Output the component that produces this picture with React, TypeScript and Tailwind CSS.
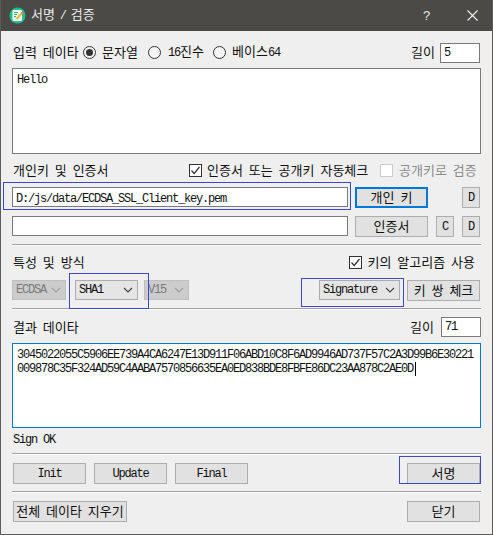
import type { ReactNode } from "react";

const hex1 = "3045022055C5906EE739A4CA6247E13D911F06ABD10C8F6AD9946AD737F57C2A3D99B6E30221";
const hex2 = "009878C35F324AD59C4AABA7570856635EA0ED838BDE8FBFE86DC23AA878C2AE0D";

function Latin({ children }: { children: ReactNode }) {
  return (
    <span className="[font-family:'Liberation_Mono',monospace] text-[12px] font-normal tracking-[-1.2px] [word-spacing:0px]">
      {children}
    </span>
  );
}

// Hangul sits a pixel low in its line box, this lifts it
function Ko({ children, className }: { children: ReactNode; className?: string }) {
  return <span className={`inline-block pb-[2px] ${className ?? ""}`}>{children}</span>;
}

function Radio({ checked, className }: { checked?: boolean; className?: string }) {
  return (
    <span
      className={`flex h-[13px] w-[13px] shrink-0 items-center justify-center rounded-full border border-[#333333] bg-[#f4f4f4] ${className ?? ""}`}
    >
      {checked && <span className="h-[7px] w-[7px] rounded-full bg-[#333333]" />}
    </span>
  );
}

function Check({ checked, disabled, className }: { checked?: boolean; disabled?: boolean; className?: string }) {
  return (
    <span
      className={`flex h-[13px] w-[13px] shrink-0 items-center justify-center border ${
        disabled ? "border-[#cccccc] bg-white" : "border-[#333333] bg-white"
      } ${className ?? ""}`}
    >
      {checked && (
        <svg width="11" height="11" viewBox="0 0 11 11" fill="none" stroke="#333333" strokeWidth="1.2">
          <path d="M1.5 5.5 L4.2 8.5 L9.5 2" />
        </svg>
      )}
    </span>
  );
}

function Btn({ children, className, focus }: { children: ReactNode; className?: string; focus?: boolean }) {
  return (
    <div
      className={`flex h-[21px] shrink-0 items-center justify-center bg-[#e1e1e1] ${
        focus ? "border-2 border-[#0078d7]" : "border border-[#adadad]"
      } ${className ?? ""}`}
    >
      {children}
    </div>
  );
}

function Combo({ label, disabled, className }: { label: string; disabled?: boolean; className?: string }) {
  return (
    <div
      className={`flex h-[20px] shrink-0 items-center justify-between pl-[3px] pr-[4px] border ${
        disabled ? "border-[#bfbfbf] bg-[#cccccc] text-[#7a7a7a]" : "border-[#acacac] bg-[#e5e5e5] text-[#111111]"
      } ${className ?? ""}`}
    >
      <Latin>{label}</Latin>
      <svg width="10" height="6" viewBox="0 0 10 6" fill="none" stroke={disabled ? "#a0a0a0" : "#444444"} strokeWidth="1.2">
        <path d="M1 1 L5 5 L9 1" />
      </svg>
    </div>
  );
}

function Sep({ className }: { className?: string }) {
  return <div className={`h-[2px] shrink-0 border-t border-[#a0a0a0] bg-white ${className ?? ""}`} />;
}

function Mark({ className }: { className: string }) {
  return <div className={`pointer-events-none absolute border border-[#3c46d0] ${className}`} />;
}

function AppIcon() {
  return (
    <svg width="17" height="17" viewBox="0 0 17 17" className="shrink-0">
      <circle cx="8.5" cy="8.5" r="8" fill="#1fc08e" />
      <rect x="3.5" y="3" width="9.5" height="11" rx="1" fill="#f4f7f2" />
      <path d="M5 5.5h4M5 7.5h3M5 9.5h2" stroke="#2fae7c" strokeWidth="1" />
      <path d="M7.5 12 L13 6" stroke="#f0b429" strokeWidth="2" />
      <path d="M12.5 6.5 L14 4.8" stroke="#e8748a" strokeWidth="2" />
    </svg>
  );
}

export default function App() {
  return (
    <div className="flex h-[535px] w-[493px] flex-col overflow-hidden border-x border-b border-[#5c5b59] bg-[#efefef] [font-family:'Noto_Sans_CJK_KR',sans-serif] text-[13px] leading-none text-[#111111] [word-spacing:3px]">
      {/* title bar */}
      <div className="flex h-[31px] shrink-0 items-center bg-[#4c4a47] pl-[8px] text-[#e8e8e8]">
        <AppIcon />
        <Ko className="ml-[5px] w-[60px] whitespace-nowrap [word-spacing:2px]">
          서명 <Latin>/</Latin> 검증
        </Ko>
        <span className="ml-[332px] [font-family:'Liberation_Sans',sans-serif] text-[13px]">?</span>
        <svg width="11" height="11" viewBox="0 0 11 11" stroke="#f0f0f0" strokeWidth="1.1" className="ml-[37px]">
          <path d="M0.5 0.5 L10.5 10.5 M10.5 0.5 L0.5 10.5" />
        </svg>
      </div>

      <div className="flex w-[480px] flex-col pl-[11px] pt-[11px]">
        {/* input row */}
        <div className="flex h-[21px] items-center">
          <Ko className="ml-[1px] w-[70px]">입력 데이타</Ko>
          <Radio checked />
          <Ko className="ml-[6px] w-[46px]">문자열</Ko>
          <Radio />
          <Ko className="ml-[7px] w-[45px]">
            <Latin>16</Latin>진수
          </Ko>
          <Radio />
          <Ko className="ml-[6px] w-[179px]">
            베이스<Latin>64</Latin>
          </Ko>
          <Ko className="w-[29px]">길이</Ko>
          <div className="flex h-[20px] w-[40px] items-center border border-[#7a7a7a] bg-white pl-[3px]">
            <Latin>5</Latin>
          </div>
        </div>

        <div className="mt-[5px] h-[86px] w-[469px] border border-[#7a7a7a] bg-white px-[4px] pt-[2px]">
          <Latin>Hello</Latin>
        </div>

        {/* key and certificate */}
        <div className="mt-[7px] flex h-[18px] items-center">
          <Ko className="ml-[1px] w-[176px]">개인키 및 인증서</Ko>
          <Check checked />
          <Ko className="ml-[5px] w-[173px]">인증서 또는 공개키 자동체크</Ko>
          <Check disabled />
          <Ko className="ml-[6px] text-[#8c8c8c]">공개키로 검증</Ko>
        </div>

        <div className="mt-[8px] flex h-[21px] items-start">
          <div className="relative h-[20px] w-[336px] shrink-0 border border-[#7a7a7a] bg-white pl-[3px] pt-[2px]">
            <Latin>D:/js/data/ECDSA_SSL_Client_key.pem</Latin>
            <Mark className="-left-[10px] -top-[6px] h-[28px] w-[348px]" />
          </div>
          <Btn focus className="ml-[7px] w-[73px]"><Ko>개인 키</Ko></Btn>
          <Btn className="ml-[34px] w-[18px]"><Latin>D</Latin></Btn>
        </div>

        <div className="mt-[8px] flex h-[21px] items-start">
          <div className="h-[20px] w-[336px] shrink-0 border border-[#7a7a7a] bg-white" />
          <Btn className="ml-[7px] w-[73px]"><Ko>인증서</Ko></Btn>
          <Btn className="ml-[8px] w-[18px]"><Latin>C</Latin></Btn>
          <Btn className="ml-[8px] w-[18px]"><Latin>D</Latin></Btn>
        </div>

        <Sep className="mt-[7px] w-[469px]" />

        {/* properties */}
        <div className="mt-[7px] flex h-[18px] w-[469px] items-center justify-between pl-[1px] pr-[6px]">
          <Ko>특성 및 방식</Ko>
          <span className="flex items-center">
            <Check checked className="mr-[5px]" />
            <Ko>키의 알고리즘 사용</Ko>
          </span>
        </div>

        <div className="mt-[9px] flex h-[21px] items-start">
          <Combo disabled label="ECDSA" className="w-[54px]" />
          <div className="relative ml-[9px]">
            <Combo label="SHA1" className="w-[63px]" />
            <Mark className="-left-[6px] -top-[7px] h-[36px] w-[80px]" />
          </div>
          <Combo disabled label="V15" className="ml-[6px] w-[45px]" />
          <div className="relative ml-[130px]">
            <Combo label="Signature" className="w-[81px] text-[#111111]" />
            <Mark className="-left-[18px] -top-[2px] h-[29px] w-[103px]" />
          </div>
          <Btn className="ml-[7px] w-[73px]"><Ko>키 쌍 체크</Ko></Btn>
        </div>

        <Sep className="mt-[7px] w-[469px]" />

        {/* result */}
        <div className="mt-[7px] flex h-[20px] w-[469px] items-center justify-between pl-[1px]">
          <Ko>결과 데이타</Ko>
          <span className="flex items-center">
            <Ko className="mr-[7px]">길이</Ko>
            <div className="flex h-[20px] w-[40px] items-center border border-[#7a7a7a] bg-white pl-[3px]">
              <Latin>71</Latin>
            </div>
          </span>
        </div>

        <div className="mt-[6px] h-[85px] w-[469px] border border-[#0078d7] bg-white pl-[4px] pt-[2px] whitespace-pre">
          <div className="h-[15px]"><Latin>{hex1}</Latin></div>
          <div className="flex h-[15px] items-center">
            <Latin>{hex2}</Latin>
            <span className="ml-[2px] h-[14px] w-[1px] bg-black" />
          </div>
        </div>

        <div className="mt-[3px] flex h-[18px] items-center pl-[1px]">
          <Latin>Sign OK</Latin>
        </div>

        <Sep className="mt-[4px] w-[469px]" />

        <div className="mt-[8px] flex h-[21px] items-start pl-[1px]">
          <Btn className="w-[73px]"><Latin>Init</Latin></Btn>
          <Btn className="ml-[8px] w-[73px]"><Latin>Update</Latin></Btn>
          <Btn className="ml-[8px] w-[73px]"><Latin>Final</Latin></Btn>
          <div className="relative ml-[159px]">
            <Btn className="w-[73px]"><Ko>서명</Ko></Btn>
            <Mark className="-left-[8px] -top-[7px] h-[28px] w-[82px]" />
          </div>
        </div>

        <Sep className="mt-[7px] w-[469px]" />

        <div className="mt-[8px] flex h-[21px] items-start pl-[1px]">
          <Btn className="w-[114px]"><Ko>전체 데이타 지우기</Ko></Btn>
          <Btn className="ml-[280px] w-[73px]"><Ko>닫기</Ko></Btn>
        </div>
      </div>
    </div>
  );
}
